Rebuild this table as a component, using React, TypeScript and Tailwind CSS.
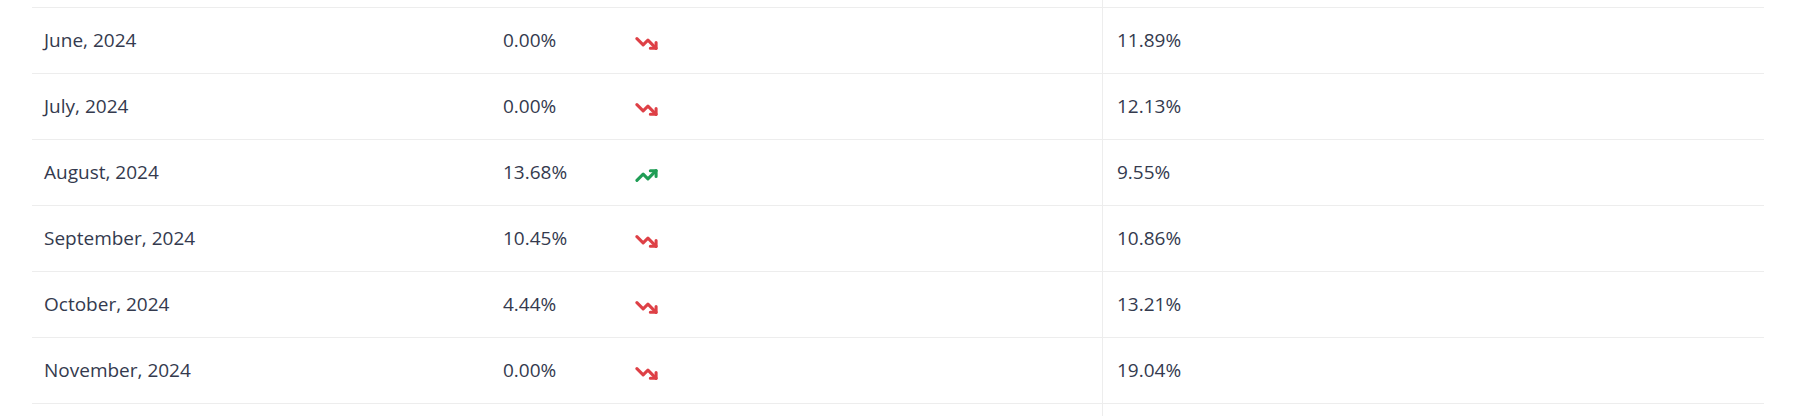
import React from 'react';
import { TrendingDown, TrendingUp } from 'lucide-react';

interface RowData {
    month: string;
    change: string;
    up: boolean;
    rate: string;
}

const rows: RowData[] = [
    { month: 'June, 2024', change: '0.00%', up: false, rate: '11.89%' },
    { month: 'July, 2024', change: '0.00%', up: false, rate: '12.13%' },
    { month: 'August, 2024', change: '13.68%', up: true, rate: '9.55%' },
    { month: 'September, 2024', change: '10.45%', up: false, rate: '10.86%' },
    { month: 'October, 2024', change: '4.44%', up: false, rate: '13.21%' },
    { month: 'November, 2024', change: '0.00%', up: false, rate: '19.04%' },
];

const gridCols = 'grid grid-cols-[459px_132px_479px_1fr]';

// only the vertical divider of the last column shows on the clipped rows
const PartialRow: React.FC<{ height: string; border?: boolean }> = ({ height, border }) => (
    <div className={`${gridCols} ${height} ${border ? 'border-t border-[#ededed]' : ''}`}>
        <div />
        <div />
        <div />
        <div className="border-l border-[#ededed]" />
    </div>
);

const Row: React.FC<{ row: RowData }> = ({ row }) => (
    <div className={`${gridCols} h-[66px] border-t border-[#ededed]`}>
        <div className="flex items-center pl-3">{row.month}</div>
        <div className="flex items-center pl-3">{row.change}</div>
        <div className="flex items-center pl-[12px] pt-[5px]">
            {row.up ? (
                <TrendingUp size={23} strokeWidth={3.2} className="text-[#1f9d55]" />
            ) : (
                <TrendingDown size={23} strokeWidth={3.2} className="text-[#de4046]" />
            )}
        </div>
        <div className="flex items-center pl-[14px] border-l border-[#ededed]">{row.rate}</div>
    </div>
);

export default function App() {
    return (
        <div className="w-[1802px] h-[416px] overflow-hidden bg-white">
            <div
                className="mx-[32px] w-[1732px] text-[19px] text-[#343a4e]"
                style={{ fontFamily: '"Open Sans", "Noto Sans", sans-serif' }}
            >
                <PartialRow height="h-[7px]" />
                {rows.map((r) => (
                    <Row key={r.month} row={r} />
                ))}
                <PartialRow height="h-[20px]" border />
            </div>
        </div>
    );
}
